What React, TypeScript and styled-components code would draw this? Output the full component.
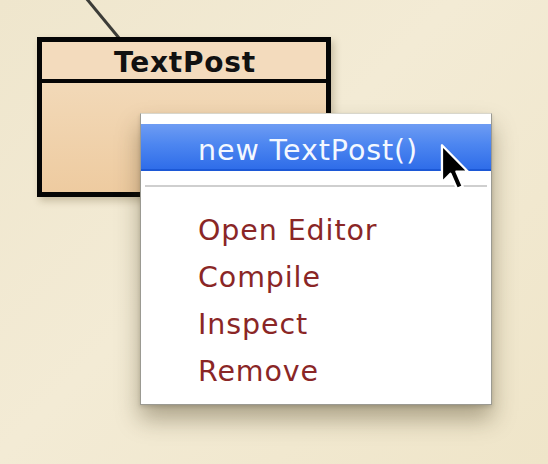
import React from "react";
import styled, { createGlobalStyle } from "styled-components";

const GlobalStyle = createGlobalStyle`
  html, body { margin: 0; padding: 0; }
  body {
    width: 548px;
    height: 464px;
    overflow: hidden;
    font-family: "DejaVu Sans", "Liberation Sans", sans-serif;
  }
`;

const Canvas = styled.div`
  position: relative;
  width: 548px;
  height: 464px;
  overflow: hidden;
  background: linear-gradient(135deg, #efe6cd 0%, #f3ebd5 45%, #efe5c9 100%);
`;

const Connector = styled.svg`
  position: absolute;
  left: 0;
  top: 0;
`;

const ClassBox = styled.div`
  position: absolute;
  left: 37px;
  top: 37px;
  width: 294px;
  height: 160px;
  box-sizing: border-box;
  border: 5px solid #050505;
  display: flex;
  flex-direction: column;
  box-shadow: 3px 4px 7px rgba(80, 60, 20, 0.25);
`;

const ClassHeader = styled.div`
  height: 41px;
  border-bottom: 4px solid #050505;
  background: #f3dbbd;
  display: flex;
  align-items: center;
  justify-content: center;
  font-family: "DejaVu Sans", sans-serif;
  font-weight: bold;
  font-size: 28px;
  color: #111;
  letter-spacing: 0.8px;
  padding: 3px 0 0 2px;
  box-sizing: border-box;
`;

const ClassBody = styled.div`
  flex: 1;
  background: linear-gradient(180deg, #f2d9b8 0%, #eecba0 100%);
`;

const Menu = styled.div`
  position: absolute;
  left: 140px;
  top: 113px;
  width: 352px;
  height: 292px;
  box-sizing: border-box;
  background: #ffffff;
  border: 1.5px solid #9b9a92;
  border-top-color: #d8d6cc;
  padding: 10px 0 12px;
  box-shadow: 0 14px 22px rgba(60, 50, 20, 0.38), 0 2px 4px rgba(0, 0, 0, 0.15);
  display: flex;
  flex-direction: column;
`;

const MenuItem = styled.div<{ $active?: boolean }>`
  height: 47px;
  flex: none;
  display: flex;
  align-items: center;
  padding-left: 57px;
  padding-top: 7px;
  font-family: "DejaVu Sans", sans-serif;
  font-size: 28.5px;
  letter-spacing: 0.9px;
  color: ${(p) => (p.$active ? "#f4f8ff" : "#8a2626")};
  background: ${(p) =>
    p.$active
      ? "linear-gradient(180deg, #6e9cf3 0%, #4d86f0 45%, #2f6de9 100%)"
      : "transparent"};
  border-bottom: ${(p) => (p.$active ? "2px solid #1c58d6" : "none")};
  box-sizing: border-box;
`;

const Separator = styled.div`
  height: 32px;
  flex: none;
  display: flex;
  align-items: center;
  padding: 0 4px;
  &::after {
    content: "";
    flex: 1;
    height: 2px;
    background: #cfcfcf;
    margin-top: -2px;
  }
`;

const Cursor = styled.svg`
  position: absolute;
  left: 439px;
  top: 142px;
`;

export default function App() {
  return (
    <>
      <GlobalStyle />
      <Canvas>
        <Connector width="548" height="464">
          <line x1="86" y1="-2" x2="119" y2="38" stroke="#3c3c38" strokeWidth="3" />
        </Connector>
        <ClassBox>
          <ClassHeader>TextPost</ClassHeader>
          <ClassBody />
        </ClassBox>
        <Menu>
          <MenuItem $active>new TextPost()</MenuItem>
          <Separator />
          <MenuItem>Open Editor</MenuItem>
          <MenuItem>Compile</MenuItem>
          <MenuItem>Inspect</MenuItem>
          <MenuItem>Remove</MenuItem>
        </Menu>
        <Cursor width="32" height="52" viewBox="0 0 14 22.5">
          <path
            d="M1.3 1.3 L1.3 17.5 L5 13.8 L7.9 20.4 L10.4 19.3 L7.6 12.8 L12.6 12.8 Z"
            fill="#000"
            stroke="#fff"
            strokeWidth="1"
            strokeLinejoin="round"
          />
        </Cursor>
      </Canvas>
    </>
  );
}
